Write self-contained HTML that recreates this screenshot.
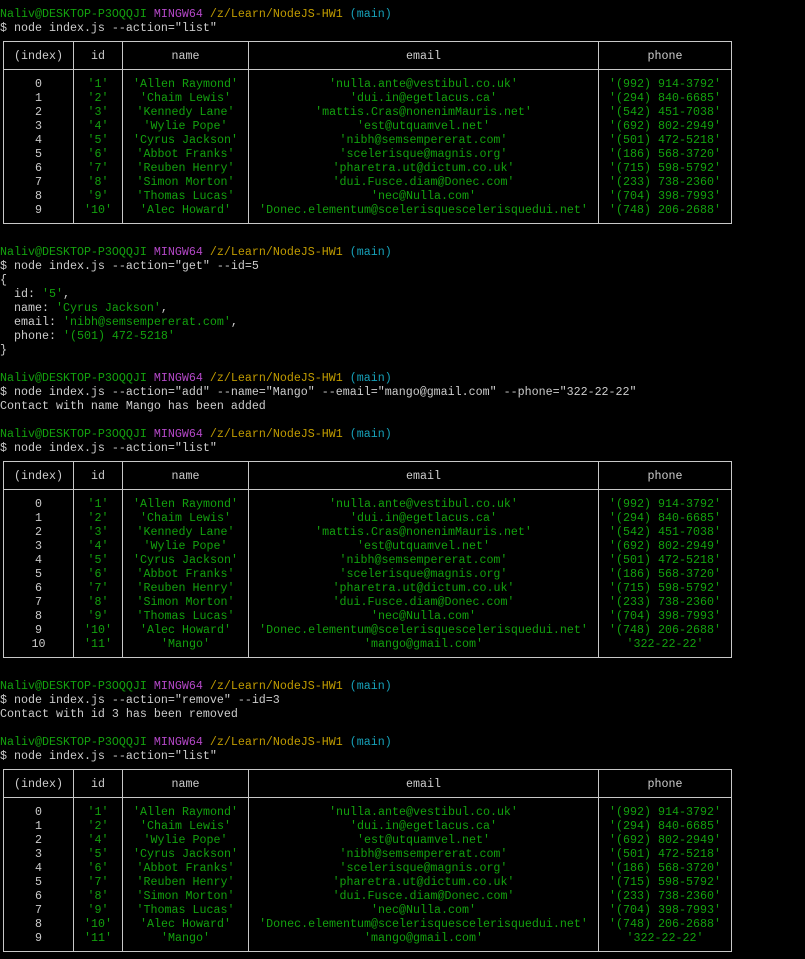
<!DOCTYPE html>
<html><head><meta charset="utf-8"><style>
html,body{margin:0;padding:0;background:#000;width:805px;height:959px;overflow:hidden}
#t{position:absolute;left:0;top:7px;font-family:"Liberation Mono",monospace;font-size:11.67px;line-height:14px;color:#cccccc}
.l{height:14px;white-space:pre;position:relative}
.g{color:#13a10e}.m{color:#b448c8}.y{color:#c19c00}.c{color:#16a0b8}
.tb{position:relative}
.h{position:absolute;left:3px;width:729px;height:1px;background:#c8c8c8;margin-top:-1px}
.v{position:absolute;top:6px;width:1px;background:#c8c8c8}
.r{height:14px;position:relative;white-space:pre}
.r span{position:absolute;top:0;text-align:center;display:block}
.a{left:7px;width:63px}.b{left:77px;width:42px;color:#13a10e}.d{left:126px;width:119px;color:#13a10e}.e{left:252px;width:343px;color:#13a10e}.f{left:602px;width:126px;color:#13a10e}
.hd span{color:#cccccc}
</style></head><body><div id="t">
<div class="l"><span class="g">Naliv@DESKTOP-P3OQQJI</span> <span class="m">MINGW64</span> <span class="y">/z/Learn/NodeJS-HW1</span> <span class="c">(main)</span></div>
<div class="l">$ node index.js --action="list"</div>
<div class="tb" style="height:196px">
<div class="h" style="top:7px"></div><div class="h" style="top:35px"></div><div class="h" style="top:189px"></div>
<div class="v" style="left:3px;height:183px"></div><div class="v" style="left:73px;height:183px"></div><div class="v" style="left:122px;height:183px"></div><div class="v" style="left:248px;height:183px"></div><div class="v" style="left:598px;height:183px"></div><div class="v" style="left:731px;height:183px"></div>
<div class="r"></div>
<div class="r hd"><span class="a">(index)</span><span class="b">id</span><span class="d">name</span><span class="e">email</span><span class="f">phone</span></div>
<div class="r"></div>
<div class="r"><span class="a">0</span><span class="b">'1'</span><span class="d">'Allen Raymond'</span><span class="e">'nulla.ante@vestibul.co.uk'</span><span class="f">'(992) 914-3792'</span></div>
<div class="r"><span class="a">1</span><span class="b">'2'</span><span class="d">'Chaim Lewis'</span><span class="e">'dui.in@egetlacus.ca'</span><span class="f">'(294) 840-6685'</span></div>
<div class="r"><span class="a">2</span><span class="b">'3'</span><span class="d">'Kennedy Lane'</span><span class="e">'mattis.Cras@nonenimMauris.net'</span><span class="f">'(542) 451-7038'</span></div>
<div class="r"><span class="a">3</span><span class="b">'4'</span><span class="d">'Wylie Pope'</span><span class="e">'est@utquamvel.net'</span><span class="f">'(692) 802-2949'</span></div>
<div class="r"><span class="a">4</span><span class="b">'5'</span><span class="d">'Cyrus Jackson'</span><span class="e">'nibh@semsempererat.com'</span><span class="f">'(501) 472-5218'</span></div>
<div class="r"><span class="a">5</span><span class="b">'6'</span><span class="d">'Abbot Franks'</span><span class="e">'scelerisque@magnis.org'</span><span class="f">'(186) 568-3720'</span></div>
<div class="r"><span class="a">6</span><span class="b">'7'</span><span class="d">'Reuben Henry'</span><span class="e">'pharetra.ut@dictum.co.uk'</span><span class="f">'(715) 598-5792'</span></div>
<div class="r"><span class="a">7</span><span class="b">'8'</span><span class="d">'Simon Morton'</span><span class="e">'dui.Fusce.diam@Donec.com'</span><span class="f">'(233) 738-2360'</span></div>
<div class="r"><span class="a">8</span><span class="b">'9'</span><span class="d">'Thomas Lucas'</span><span class="e">'nec@Nulla.com'</span><span class="f">'(704) 398-7993'</span></div>
<div class="r"><span class="a">9</span><span class="b">'10'</span><span class="d">'Alec Howard'</span><span class="e">'Donec.elementum@scelerisquescelerisquedui.net'</span><span class="f">'(748) 206-2688'</span></div>
</div>
<div class="l"></div>
<div class="l"><span class="g">Naliv@DESKTOP-P3OQQJI</span> <span class="m">MINGW64</span> <span class="y">/z/Learn/NodeJS-HW1</span> <span class="c">(main)</span></div>
<div class="l">$ node index.js --action="get" --id=5</div>
<div class="l">{</div>
<div class="l">  id: <span class="g">'5'</span>,</div>
<div class="l">  name: <span class="g">'Cyrus Jackson'</span>,</div>
<div class="l">  email: <span class="g">'nibh@semsempererat.com'</span>,</div>
<div class="l">  phone: <span class="g">'(501) 472-5218'</span></div>
<div class="l">}</div>
<div class="l"></div>
<div class="l"><span class="g">Naliv@DESKTOP-P3OQQJI</span> <span class="m">MINGW64</span> <span class="y">/z/Learn/NodeJS-HW1</span> <span class="c">(main)</span></div>
<div class="l">$ node index.js --action="add" --name="Mango" --email="mango@gmail.com" --phone="322-22-22"</div>
<div class="l">Contact with name Mango has been added</div>
<div class="l"></div>
<div class="l"><span class="g">Naliv@DESKTOP-P3OQQJI</span> <span class="m">MINGW64</span> <span class="y">/z/Learn/NodeJS-HW1</span> <span class="c">(main)</span></div>
<div class="l">$ node index.js --action="list"</div>
<div class="tb" style="height:210px">
<div class="h" style="top:7px"></div><div class="h" style="top:35px"></div><div class="h" style="top:203px"></div>
<div class="v" style="left:3px;height:197px"></div><div class="v" style="left:73px;height:197px"></div><div class="v" style="left:122px;height:197px"></div><div class="v" style="left:248px;height:197px"></div><div class="v" style="left:598px;height:197px"></div><div class="v" style="left:731px;height:197px"></div>
<div class="r"></div>
<div class="r hd"><span class="a">(index)</span><span class="b">id</span><span class="d">name</span><span class="e">email</span><span class="f">phone</span></div>
<div class="r"></div>
<div class="r"><span class="a">0</span><span class="b">'1'</span><span class="d">'Allen Raymond'</span><span class="e">'nulla.ante@vestibul.co.uk'</span><span class="f">'(992) 914-3792'</span></div>
<div class="r"><span class="a">1</span><span class="b">'2'</span><span class="d">'Chaim Lewis'</span><span class="e">'dui.in@egetlacus.ca'</span><span class="f">'(294) 840-6685'</span></div>
<div class="r"><span class="a">2</span><span class="b">'3'</span><span class="d">'Kennedy Lane'</span><span class="e">'mattis.Cras@nonenimMauris.net'</span><span class="f">'(542) 451-7038'</span></div>
<div class="r"><span class="a">3</span><span class="b">'4'</span><span class="d">'Wylie Pope'</span><span class="e">'est@utquamvel.net'</span><span class="f">'(692) 802-2949'</span></div>
<div class="r"><span class="a">4</span><span class="b">'5'</span><span class="d">'Cyrus Jackson'</span><span class="e">'nibh@semsempererat.com'</span><span class="f">'(501) 472-5218'</span></div>
<div class="r"><span class="a">5</span><span class="b">'6'</span><span class="d">'Abbot Franks'</span><span class="e">'scelerisque@magnis.org'</span><span class="f">'(186) 568-3720'</span></div>
<div class="r"><span class="a">6</span><span class="b">'7'</span><span class="d">'Reuben Henry'</span><span class="e">'pharetra.ut@dictum.co.uk'</span><span class="f">'(715) 598-5792'</span></div>
<div class="r"><span class="a">7</span><span class="b">'8'</span><span class="d">'Simon Morton'</span><span class="e">'dui.Fusce.diam@Donec.com'</span><span class="f">'(233) 738-2360'</span></div>
<div class="r"><span class="a">8</span><span class="b">'9'</span><span class="d">'Thomas Lucas'</span><span class="e">'nec@Nulla.com'</span><span class="f">'(704) 398-7993'</span></div>
<div class="r"><span class="a">9</span><span class="b">'10'</span><span class="d">'Alec Howard'</span><span class="e">'Donec.elementum@scelerisquescelerisquedui.net'</span><span class="f">'(748) 206-2688'</span></div>
<div class="r"><span class="a">10</span><span class="b">'11'</span><span class="d">'Mango'</span><span class="e">'mango@gmail.com'</span><span class="f">'322-22-22'</span></div>
</div>
<div class="l"></div>
<div class="l"><span class="g">Naliv@DESKTOP-P3OQQJI</span> <span class="m">MINGW64</span> <span class="y">/z/Learn/NodeJS-HW1</span> <span class="c">(main)</span></div>
<div class="l">$ node index.js --action="remove" --id=3</div>
<div class="l">Contact with id 3 has been removed</div>
<div class="l"></div>
<div class="l"><span class="g">Naliv@DESKTOP-P3OQQJI</span> <span class="m">MINGW64</span> <span class="y">/z/Learn/NodeJS-HW1</span> <span class="c">(main)</span></div>
<div class="l">$ node index.js --action="list"</div>
<div class="tb" style="height:196px">
<div class="h" style="top:7px"></div><div class="h" style="top:35px"></div><div class="h" style="top:189px"></div>
<div class="v" style="left:3px;height:183px"></div><div class="v" style="left:73px;height:183px"></div><div class="v" style="left:122px;height:183px"></div><div class="v" style="left:248px;height:183px"></div><div class="v" style="left:598px;height:183px"></div><div class="v" style="left:731px;height:183px"></div>
<div class="r"></div>
<div class="r hd"><span class="a">(index)</span><span class="b">id</span><span class="d">name</span><span class="e">email</span><span class="f">phone</span></div>
<div class="r"></div>
<div class="r"><span class="a">0</span><span class="b">'1'</span><span class="d">'Allen Raymond'</span><span class="e">'nulla.ante@vestibul.co.uk'</span><span class="f">'(992) 914-3792'</span></div>
<div class="r"><span class="a">1</span><span class="b">'2'</span><span class="d">'Chaim Lewis'</span><span class="e">'dui.in@egetlacus.ca'</span><span class="f">'(294) 840-6685'</span></div>
<div class="r"><span class="a">2</span><span class="b">'4'</span><span class="d">'Wylie Pope'</span><span class="e">'est@utquamvel.net'</span><span class="f">'(692) 802-2949'</span></div>
<div class="r"><span class="a">3</span><span class="b">'5'</span><span class="d">'Cyrus Jackson'</span><span class="e">'nibh@semsempererat.com'</span><span class="f">'(501) 472-5218'</span></div>
<div class="r"><span class="a">4</span><span class="b">'6'</span><span class="d">'Abbot Franks'</span><span class="e">'scelerisque@magnis.org'</span><span class="f">'(186) 568-3720'</span></div>
<div class="r"><span class="a">5</span><span class="b">'7'</span><span class="d">'Reuben Henry'</span><span class="e">'pharetra.ut@dictum.co.uk'</span><span class="f">'(715) 598-5792'</span></div>
<div class="r"><span class="a">6</span><span class="b">'8'</span><span class="d">'Simon Morton'</span><span class="e">'dui.Fusce.diam@Donec.com'</span><span class="f">'(233) 738-2360'</span></div>
<div class="r"><span class="a">7</span><span class="b">'9'</span><span class="d">'Thomas Lucas'</span><span class="e">'nec@Nulla.com'</span><span class="f">'(704) 398-7993'</span></div>
<div class="r"><span class="a">8</span><span class="b">'10'</span><span class="d">'Alec Howard'</span><span class="e">'Donec.elementum@scelerisquescelerisquedui.net'</span><span class="f">'(748) 206-2688'</span></div>
<div class="r"><span class="a">9</span><span class="b">'11'</span><span class="d">'Mango'</span><span class="e">'mango@gmail.com'</span><span class="f">'322-22-22'</span></div>
</div>
</div></body></html>
